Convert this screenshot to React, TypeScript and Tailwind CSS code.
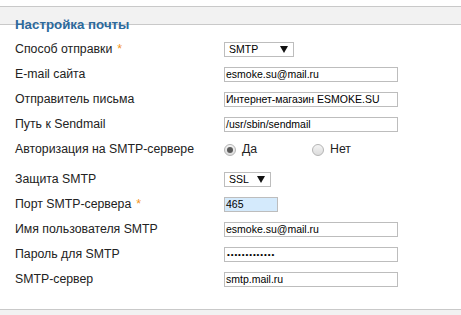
import React from 'react';

const FONT = "font-['Liberation_Sans',Arial,sans-serif]";

function Label({ text, required }: { text: string; required?: boolean }) {
  return (
    <div className="w-[224px] shrink-0 pl-[15px] text-[12.3px] text-[#222]">
      {text}
      {required && <span className="ml-[5px] text-[#f39322]">*</span>}
    </div>
  );
}

function TextBox({ value, width = 'w-[174px]', tint }: { value: string; width?: string; tint?: boolean }) {
  return (
    <div
      className={`${width} h-[15px] border border-[#bdbdbd] pl-[1px] text-[10.5px] leading-[13px] text-black ${
        tint ? 'bg-[#d4eafc] border-[#b3b3b3]' : 'bg-white'
      }`}
    >
      {value}
    </div>
  );
}

function SelectBox({ value, width }: { value: string; width: string }) {
  return (
    <div
      className={`${width} h-[15px] border border-[#bdbdbd] bg-white flex items-center justify-between pl-[4px] pr-[5px] text-[10.5px] text-black`}
    >
      <span>{value}</span>
      <svg width="8" height="7" viewBox="0 0 8 7">
        <path d="M0 0h8L4 7z" fill="#111" />
      </svg>
    </div>
  );
}

function Radio({ checked }: { checked?: boolean }) {
  return (
    <div className="w-[12px] h-[12px] rounded-full border border-[#b4b4b4] bg-gradient-to-b from-[#f4f4f4] to-[#dcdcdc] flex items-center justify-center">
      {checked && <div className="w-[6px] h-[6px] rounded-full bg-[#5a5a5a]" />}
    </div>
  );
}

function Row({ children }: { children: React.ReactNode }) {
  return <div className="flex items-center h-[25px]">{children}</div>;
}

export default function App() {
  return (
    <div className={`w-[461px] h-[315px] bg-white overflow-hidden ${FONT}`}>
      {/* Top band */}
      <div className="h-[6px]" />
      <div className="h-[19px] bg-[#f2f2f2] border-y border-[#c9c9c9]" />
      <h2 className="relative -mt-[8px] h-[15px] pl-[15px] text-[13.3px] leading-[15px] font-bold text-[#2d6a9c]">
        Настройка почты
      </h2>

      {/* Form */}
      <div className="mt-[5px]">
        <Row>
          <Label text="Способ отправки" required />
          <SelectBox value="SMTP" width="w-[70px]" />
        </Row>
        <Row>
          <Label text="E-mail сайта" />
          <TextBox value="esmoke.su@mail.ru" />
        </Row>
        <Row>
          <Label text="Отправитель письма" />
          <TextBox value="Интернет-магазин ESMOKE.SU" />
        </Row>
        <Row>
          <Label text="Путь к Sendmail" />
          <TextBox value="/usr/sbin/sendmail" />
        </Row>
        <Row>
          <Label text="Авторизация на SMTP-сервере" />
          <div className="flex items-center text-[12.3px] text-[#222]">
            <Radio checked />
            <span className="ml-[6px] w-[70px]">Да</span>
            <Radio />
            <span className="ml-[6px]">Нет</span>
          </div>
        </Row>
        <div className="h-[5px]" />
        <Row>
          <Label text="Защита SMTP" />
          <SelectBox value="SSL" width="w-[47px]" />
        </Row>
        <Row>
          <Label text="Порт SMTP-сервера" required />
          <TextBox value="465" width="w-[54px]" tint />
        </Row>
        <Row>
          <Label text="Имя пользователя SMTP" />
          <TextBox value="esmoke.su@mail.ru" />
        </Row>
        <Row>
          <Label text="Пароль для SMTP" />
          <div className="w-[174px] h-[15px] border border-[#bdbdbd] bg-white pl-[2px] text-[8px] leading-[13px] tracking-[0.9px] text-black">
            •••••••••••••
          </div>
        </Row>
        <Row>
          <Label text="SMTP-сервер" />
          <TextBox value="smtp.mail.ru" />
        </Row>
      </div>

      {/* Bottom band */}
      <div className="mt-[17px] h-[10px] bg-[#f2f2f2] border-t border-[#c9c9c9]" />
    </div>
  );
}
